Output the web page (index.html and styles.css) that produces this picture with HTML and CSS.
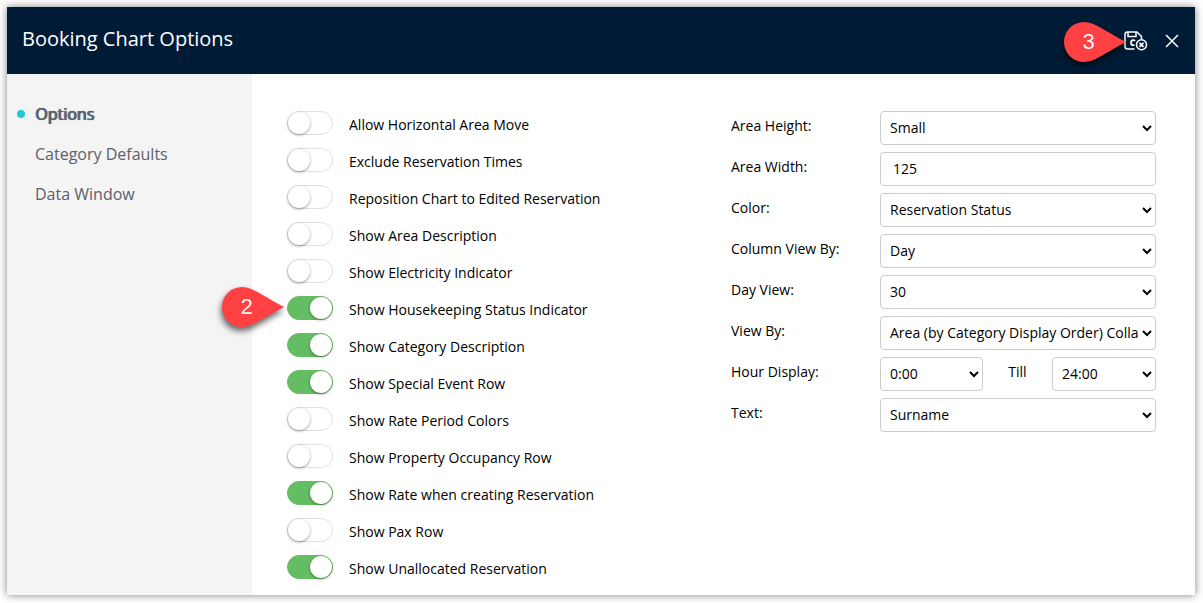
FILE: index.html
```html
<!DOCTYPE html>
<html lang="en">
<head>
    <meta charset="utf-8">
    <title>Booking Chart Options</title>
    <link rel="stylesheet" href="styles.css">
</head>
<body>
    <div class="dialog">
        <header class="header">
            <h1>Booking Chart Options</h1>
            <div class="actions">
                <button type="button" class="icon-button" aria-label="Save and close">
                    <svg width="24" height="20" viewBox="0 0 24 20" fill="none" stroke="#fff" stroke-width="1.5">
                        <path d="M10.500 18H3.500Q1 18 1 15.500V3.500Q1 1 3.500 1H13L17.500 5.500V8"/>
                        <path d="M4 1V5.500H12V1"/>
                        <path d="M11 10Q10.500 9.200 9.200 9.200Q7 9.200 7 11.700Q7 14.200 9.200 14.200H10.500" stroke-width="1.700"/>
                        <circle cx="17.500" cy="13.800" r="5"/>
                        <path d="M15.500 11.800L19.500 15.800M19.500 11.800L15.500 15.800" stroke-width="1.700"/>
                    </svg>
                </button>
                <button type="button" class="icon-button" aria-label="Close">
                    <svg width="14" height="14" viewBox="0 0 14 14" fill="none" stroke="#fff" stroke-width="1.5">
                        <path d="M1 1L13 13M13 1L1 13"/>
                    </svg>
                </button>
                <div class="pin pin-save">
                    <svg width="62" height="40" viewBox="0 0 62 40">
                        <path d="M20 0C31 0 44 11 62 20C44 29 31 40 20 40A20 20 0 0 1 20 0Z" fill="#ff4144"/>
                    </svg>
                    <span>3</span>
                </div>
            </div>
        </header>
        <div class="body">
            <nav class="sidebar">
                <a href="#" class="active">Options</a>
                <a href="#">Category Defaults</a>
                <a href="#">Data Window</a>
            </nav>
            <form class="content">
                <div class="toggles">
                    <label class="toggle"><input type="checkbox"><span>Allow Horizontal Area Move</span></label>
                    <label class="toggle"><input type="checkbox"><span>Exclude Reservation Times</span></label>
                    <label class="toggle"><input type="checkbox"><span>Reposition Chart to Edited Reservation</span></label>
                    <label class="toggle"><input type="checkbox"><span>Show Area Description</span></label>
                    <label class="toggle"><input type="checkbox"><span>Show Electricity Indicator</span></label>
                    <div class="marked">
                        <label class="toggle"><input type="checkbox" checked><span>Show Housekeeping Status Indicator</span></label>
                        <div class="pin pin-toggle">
                            <svg width="62" height="40" viewBox="0 0 62 40">
                                <path d="M20 0C31 0 44 11 62 20C44 29 31 40 20 40A20 20 0 0 1 20 0Z" fill="#ff4144"/>
                            </svg>
                            <span>2</span>
                        </div>
                    </div>
                    <label class="toggle"><input type="checkbox" checked><span>Show Category Description</span></label>
                    <label class="toggle"><input type="checkbox" checked><span>Show Special Event Row</span></label>
                    <label class="toggle"><input type="checkbox"><span>Show Rate Period Colors</span></label>
                    <label class="toggle"><input type="checkbox"><span>Show Property Occupancy Row</span></label>
                    <label class="toggle"><input type="checkbox" checked><span>Show Rate when creating Reservation</span></label>
                    <label class="toggle"><input type="checkbox"><span>Show Pax Row</span></label>
                    <label class="toggle"><input type="checkbox" checked><span>Show Unallocated Reservation</span></label>
                </div>
                <div class="fields">
                    <label for="areaHeight">Area Height:</label>
                    <select id="areaHeight"><option>Small</option></select>

                    <label for="areaWidth">Area Width:</label>
                    <input type="text" id="areaWidth" value="125">

                    <label for="color">Color:</label>
                    <select id="color"><option>Reservation Status</option></select>

                    <label for="columnView">Column View By:</label>
                    <select id="columnView"><option>Day</option></select>

                    <label for="dayView">Day View:</label>
                    <select id="dayView"><option>30</option></select>

                    <label for="viewBy">View By:</label>
                    <select id="viewBy"><option>Area (by Category Display Order) Collapsed</option></select>

                    <label for="hourFrom">Hour Display:</label>
                    <div class="hours">
                        <select id="hourFrom"><option>0:00</option></select>
                        <label for="hourTill">Till</label>
                        <select id="hourTill"><option>24:00</option></select>
                    </div>

                    <label for="text">Text:</label>
                    <select id="text"><option>Surname</option></select>
                </div>
            </form>
        </div>
    </div>
</body>
</html>
```
FILE: styles.css
```css
* {
    box-sizing: border-box;
}
body {
    margin: 0;
    padding: 7px 8px 8px 7px;
    min-height: 100vh;
    display: flex;
    background: #fff;
    color: #000;
    font-family: "Open Sans", "Noto Sans", sans-serif;
    font-size: 14px;
}
.dialog {
    flex: 1;
    display: flex;
    flex-direction: column;
    background: #fff;
    box-shadow: 0 0 8px rgba(0, 0, 0, 0.5);
}
.header {
    display: flex;
    align-items: center;
    justify-content: space-between;
    height: 67px;
    padding: 0 16px 0 15px;
    background: #001b36;
    color: #fff;
}
h1 {
    margin: 0 0 4px;
    font-size: 20px;
    font-weight: 400;
}
.actions {
    position: relative;
    display: flex;
    align-items: center;
    gap: 17px;
}
.icon-button {
    display: flex;
    padding: 0;
    border: 0;
    background: none;
    cursor: pointer;
}
.body {
    flex: 1;
    display: flex;
}
.sidebar {
    width: 245px;
    padding: 20px 0 0 28px;
    background: #f4f4f4;
}
.sidebar a {
    display: block;
    position: relative;
    line-height: 40px;
    font-size: 16px;
    color: #5c606b;
    text-decoration: none;
}
.sidebar .active {
    text-shadow: 0 0 1px #5c606b, 1px 0 0 #5c606b;
}
.sidebar .active::before {
    content: "";
    position: absolute;
    left: -18px;
    top: 16px;
    width: 8px;
    height: 8px;
    border-radius: 50%;
    background: #1fcad3;
}
.content {
    flex: 1;
    display: flex;
    justify-content: space-between;
    align-items: flex-start;
    padding: 37px 39px 15px 35px;
}
.toggles {
    display: flex;
    flex-direction: column;
    gap: 13px;
}
.toggle {
    display: flex;
    gap: 16px;
    height: 24px;
    line-height: 28px;
}
.toggle input {
    appearance: none;
    width: 46px;
    height: 24px;
    margin: 0;
    border: 1px solid #dfdfdf;
    border-radius: 12px;
    background: #fff;
}
.toggle input::before {
    content: "";
    display: block;
    width: 22px;
    height: 22px;
    border-radius: 50%;
    background: #fff;
    box-shadow: 0 1px 3px rgba(0, 0, 0, 0.4);
}
.toggle input:checked {
    border-color: #64bd63;
    background: #64bd63;
}
.toggle input:checked::before {
    margin-left: 22px;
}
.marked {
    position: relative;
}
.fields {
    display: grid;
    grid-template-columns: 149px 276px;
    row-gap: 7px;
    line-height: 30px;
}
select,
.fields input {
    width: 100%;
    height: 34px;
    padding: 0 1px 2px 5px;
    border: 1px solid #ccc;
    border-radius: 4px;
    background: #fff;
    color: #000;
    font: inherit;
}
.fields input {
    padding: 0 12px 2px;
}
.hours {
    display: grid;
    grid-template-columns: 103px 1fr 104px;
    text-align: center;
}
.pin {
    position: absolute;
    width: 62px;
    height: 40px;
    filter: drop-shadow(-1px 4px 3px rgba(0, 0, 0, 0.6));
}
.pin span {
    position: absolute;
    left: 0;
    top: 0;
    width: 49px;
    line-height: 40px;
    text-align: center;
    font-family: "Liberation Sans", Arial, sans-serif;
    font-size: 22px;
    color: #fff;
}
.pin-save {
    right: 53px;
    top: -9px;
}
.pin-toggle {
    left: -65px;
    top: -9px;
}
```
